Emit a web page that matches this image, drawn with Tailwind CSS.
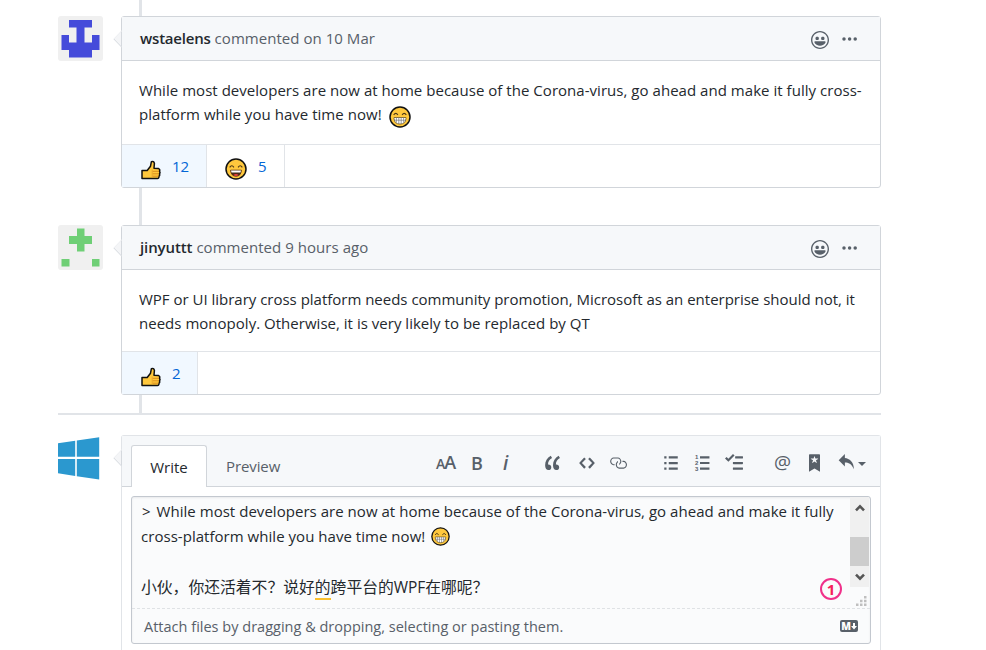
<!DOCTYPE html>
<html lang="en">
<head>
<meta charset="utf-8">
<title>Issue discussion</title>
<script src="https://cdn.jsdelivr.net/npm/@tailwindcss/browser@4"></script>
</head>
<body class="bg-white">
<svg class="hidden" xmlns="http://www.w3.org/2000/svg">
  <symbol id="smiley" viewBox="0 0 16 16"><path fill-rule="evenodd" d="M8 0C3.58 0 0 3.58 0 8s3.58 8 8 8 8-3.58 8-8-3.58-8-8-8zm4.81 12.81a6.72 6.72 0 01-2.17 1.45c-.83.36-1.72.53-2.64.53-.92 0-1.81-.17-2.64-.53-.81-.34-1.55-.83-2.17-1.45a6.773 6.773 0 01-1.45-2.17A6.59 6.59 0 011.21 8c0-.92.17-1.81.53-2.64.34-.81.83-1.55 1.45-2.17.62-.62 1.36-1.11 2.17-1.45A6.59 6.59 0 018 1.21c.92 0 1.81.17 2.64.53.81.34 1.55.83 2.17 1.45.62.62 1.11 1.36 1.45 2.17.36.83.53 1.72.53 2.64 0 .92-.17 1.81-.53 2.64-.34.81-.83 1.55-1.45 2.17zM4 6.8v-.59c0-.66.53-1.19 1.2-1.19h.59c.66 0 1.19.53 1.19 1.19v.59c0 .67-.53 1.2-1.19 1.2H5.2C4.53 8 4 7.47 4 6.8zm5 0v-.59c0-.66.53-1.19 1.2-1.19h.59c.66 0 1.19.53 1.19 1.19v.59c0 .67-.53 1.2-1.19 1.2h-.59C9.53 8 9 7.47 9 6.8zm4 3.2c-.72 1.88-2.91 3-5 3s-4.28-1.13-5-3c-.14-.39.23-1 .66-1h8.59c.41 0 .89.61.75 1z"/></symbol>
  <symbol id="dots" viewBox="0 0 16 4"><circle cx="2" cy="2" r="1.75"/><circle cx="7.6" cy="2" r="1.75"/><circle cx="13.2" cy="2" r="1.75"/></symbol>
  <symbol id="thumb" viewBox="0 0 20 20"><path d="M1 10.5h5.2L9.5 6.2 10.4 1.6Q12.8.8 13.4 3.4L13 8.200l4.600.4q1.800 1 .8 2.600 1.200 1.400 0 2.600.8 1.500-.5 2.500.3 2-1.500 2.200H1z" fill="#ffc83d" stroke="#111" stroke-width="1.5" stroke-linejoin="round"/><path d="M11.5 11.3h6.5M11.5 13.8h6.2M11.5 16.2h6" stroke="#d98d1c" stroke-width="1" fill="none"/><path d="M11.2 9.5v8" stroke="#e8a32c" stroke-width=".8"/></symbol>
  <symbol id="grin" viewBox="0 0 22 22"><circle cx="11" cy="11" r="10" fill="#ffc83d" stroke="#111" stroke-width="1.5"/><path d="M4.700 9Q6.800 5.800 8.900 9M13.100 9Q15.200 5.800 17.300 9" stroke="#4a3617" stroke-width="1.1" fill="none"/><path d="M5 11.500h12v1.200q-.6 5.400-6 5.400t-6-5.400z" fill="#fff" stroke="#6b5420" stroke-width=".8"/><path d="M7.400 11.500v5M9.800 11.500v6.500M12.200 11.500v6.500M14.600 11.500v5M5 14.200h12" stroke="#777" stroke-width=".7"/></symbol>
  <symbol id="laugh" viewBox="0 0 22 22"><circle cx="11" cy="11" r="10" fill="#ffc83d" stroke="#111" stroke-width="1.5"/><path d="M4.700 9.400Q6.800 6 8.900 9.400M13.100 9.400Q15.200 6 17.300 9.400" stroke="#4a3617" stroke-width="1.1" fill="none"/><path d="M5.600 12.200h10.800q-.4 6-5.400 6t-5.400-6z" fill="#4a2a14" stroke="#4a2a14" stroke-width=".8"/><path d="M6 12.500h10l-.5 2h-9z" fill="#fff"/><path d="M8.300 17.100q2.700-2.200 5.400 0-2.700 1.700-5.400 0z" fill="#e8413c"/></symbol>
  <symbol id="notch" viewBox="0 0 9 18"><path d="M9 .5.8 9 9 17.500z" fill="#f4f5f7"/><path d="M.8 9 9 17.500" stroke="#d5d9de" stroke-width="1" fill="none"/><path d="M.8 9 9 .5" stroke="#eceef1" stroke-width="1" fill="none"/><path d="M8 1.500h1v15H8z" fill="#d5d9de"/></symbol>
</svg>

<div class="relative h-[650px] w-[986px] overflow-hidden bg-white pl-[58px] font-['Open_Sans','Noto_Sans',sans-serif] text-[15px] text-[#24292e]">
  <div class="absolute left-[139px] top-0 h-[413px] w-[3px] bg-[#e1e4e8]"></div>

  <main class="relative flex w-[823px] flex-col pt-4">
    <article class="flex h-[172px]">
      <svg class="mr-[18px] size-[45px] shrink-0" viewBox="0 0 45 45"><rect width="45" height="45" rx="3" fill="#f0f0f0"/><path d="M11 4h23v7.500h-7.500v15h7.500v-7.500H41.500v15H34v7.500H11V34H3.500V19H11v7.500h7.500v-15H11z" fill="#454bda"/></svg>
      <section class="relative flex w-[760px] flex-col rounded-[3px] border border-[#d1d5da] bg-white">
        <svg class="absolute -left-[9px] top-[13px] h-[18px] w-[9px]"><use href="#notch"/></svg>
        <header class="flex h-11 items-center border-b border-[#d1d5da] bg-[#f6f8fa] pl-[18px] pr-[22px] text-[#586069]">
          <p class="whitespace-nowrap tracking-[0.04px]"><strong class="font-semibold tracking-[-0.2px] text-[#24292e]">wstaelens</strong> commented on 10 Mar</p>
          <svg class="ml-auto mt-[3px] size-[18px]" fill="#586069"><use href="#smiley"/></svg>
          <svg class="ml-[13px] mt-[1px] h-1 w-4" fill="#586069"><use href="#dots"/></svg>
        </header>
        <div class="flex h-[84px] flex-col border-b border-[#e1e4e8] pl-[17px] pt-[17px] leading-6">
          <p class="whitespace-nowrap tracking-[0.035px]">While most developers are now at home because of the Corona-virus, go ahead and make it fully cross-</p>
          <p class="flex whitespace-nowrap tracking-[0.035px]"><span>platform while you have time now!</span><svg class="ml-[7px] mt-[4px] size-[22px]"><use href="#grin"/></svg></p>
        </div>
        <div class="flex flex-1 text-[#0366d6]">
          <div class="flex w-[85px] border-r border-[#e1e4e8] bg-[#f1f8ff] pl-[19px]"><svg class="mt-[15px] size-5"><use href="#thumb"/></svg><span class="ml-[11px] mt-[10px] leading-[22px]">12</span></div>
          <div class="flex w-[78px] border-r border-[#e1e4e8] pl-[18px]"><svg class="mt-[13px] size-[22px]"><use href="#laugh"/></svg><span class="ml-[11px] mt-[10px] leading-[22px]">5</span></div>
        </div>
      </section>
    </article>

    <article class="mt-[37px] flex h-[170px]">
      <svg class="mr-[18px] size-[45px] shrink-0" viewBox="0 0 45 45"><rect width="45" height="45" rx="3" fill="#f0f0f0"/><path d="M19 3.500h7.500V11H34v8h-7.500v7.500H19V19h-8v-8h8zM3.500 34h8v7.500h-8zM34 34h7.500v7.500H34z" fill="#6fcf76"/></svg>
      <section class="relative flex w-[760px] flex-col rounded-[3px] border border-[#d1d5da] bg-white">
        <svg class="absolute -left-[9px] top-[13px] h-[18px] w-[9px]"><use href="#notch"/></svg>
        <header class="flex h-11 items-center border-b border-[#d1d5da] bg-[#f6f8fa] pl-[18px] pr-[22px] text-[#586069]">
          <p class="whitespace-nowrap tracking-[0.04px]"><strong class="font-semibold tracking-[-0.1px] text-[#24292e]">jinyuttt</strong> commented 9 hours ago</p>
          <svg class="ml-auto mt-[2px] size-[18px]" fill="#586069"><use href="#smiley"/></svg>
          <svg class="ml-[13px] mt-[1px] h-1 w-4" fill="#586069"><use href="#dots"/></svg>
        </header>
        <div class="flex h-[82px] flex-col border-b border-[#e1e4e8] pl-[17px] pt-[17px] leading-6">
          <p class="whitespace-nowrap tracking-[-0.01px]">WPF or UI library cross platform needs community promotion, Microsoft as an enterprise should not, it</p>
          <p class="whitespace-nowrap tracking-[0.02px]">needs monopoly. Otherwise, it is very likely to be replaced by QT</p>
        </div>
        <div class="flex flex-1 text-[#0366d6]">
          <div class="flex w-[76px] border-r border-[#e1e4e8] bg-[#f1f8ff] pl-[19px]"><svg class="mt-[15px] size-5"><use href="#thumb"/></svg><span class="ml-[11px] mt-[10px] leading-[22px]">2</span></div>
        </div>
      </section>
    </article>

    <div class="mt-[18px] h-[2px] bg-[#e1e4e8]"></div>

    <div class="mt-5 flex h-[230px]">
      <svg class="mr-[18px] mt-[1px] h-[45px] w-[45px] shrink-0" viewBox="0 0 45 45" fill="#2b98cf"><path d="M0 7.200 17.200 4.800V20.700H0zM18.800 4.500 41.200 1.200V20.700H18.800zM0 23H17.200V40L0 37.300zM18.800 23H41.200V43.400L18.800 40.300z"/></svg>
      <section class="relative flex w-[760px] flex-col rounded-t-[3px] border border-b-0 border-[#e1e4e8] bg-white">
        <svg class="absolute -left-[9px] top-[13px] h-[18px] w-[9px]"><use href="#notch"/></svg>
        <header class="flex h-[51px] border-b border-[#d1d5da] bg-[#f6f8fa] pl-[9px]">
          <div class="-mb-px mt-[9px] flex h-[42px] w-[76px] items-center justify-center rounded-t-[3px] border border-b-0 border-[#d1d5da] bg-white pt-[1px]">Write</div>
          <div class="ml-[19px] mt-[9px] flex h-[42px] w-[60px] items-center pt-[1px] tracking-[-0.1px] text-[#586069]">Preview</div>
          <div class="mt-[18px] flex h-[18px] items-center pl-[150px] text-[#586069]">
            <span class="flex w-5 items-baseline font-['Open_Sans'] font-semibold leading-[18px] tracking-[-1px]"><span class="text-[14px]">A</span><span class="text-[18px]">A</span></span>
            <span class="ml-[15px] w-[13px] text-[18px] font-semibold leading-[18px]">B</span>
            <span class="ml-[19px] w-[6px] text-[19px] font-semibold italic leading-[18px]">i</span>
            <svg class="ml-[36px] h-[18px] w-4 shrink-0" viewBox="0 0 14 16" fill="#586069"><path d="M6.160 3.500C3.730 5.060 2.550 6.670 2.550 9.360c.16-.05.3-.05.44-.05 1.270 0 2.500.86 2.500 2.410 0 1.610-1.030 2.610-2.500 2.610-1.900 0-2.990-1.520-2.990-4.250 0-3.800 1.750-6.530 5.020-8.420L6.160 3.500zm7 0c-2.430 1.560-3.610 3.170-3.610 5.860.16-.05.3-.05.44-.05 1.270 0 2.500.86 2.500 2.410 0 1.610-1.030 2.610-2.500 2.610-1.890 0-2.980-1.520-2.980-4.250 0-3.800 1.750-6.530 5.020-8.420l1.140 1.840h-.01z"/></svg>
            <svg class="ml-[18px] h-[18px] w-4 shrink-0" viewBox="0 0 14 16" fill="#586069"><path d="M9.500 3L8 4.500 11.500 8 8 11.500 9.500 13 14 8 9.500 3zm-5 0L0 8l4.500 5L6 11.500 2.500 8 6 4.500 4.500 3z"/></svg>
            <svg class="ml-[14px] size-[18px] shrink-0" viewBox="0 0 16 16" fill="#586069"><path fill-rule="evenodd" d="M4 9h1v1H4c-1.500 0-3-1.690-3-3.500S2.550 3 4 3h4c1.450 0 3 1.690 3 3.500 0 1.410-.91 2.720-2 3.250V8.590c.58-.45 1-1.270 1-2.090C10 5.220 8.980 4 8 4H4c-.98 0-2 1.220-2 2.500S3 9 4 9zm9-3h-1v1h1c1 0 2 1.220 2 2.500S13.980 12 13 12H9c-.98 0-2-1.220-2-2.500 0-.83.42-1.640 1-2.090V6.250c-1.090.53-2 1.840-2 3.250C6 11.310 7.550 13 9 13h4c1.450 0 3-1.690 3-3.500S14.500 6 13 6z"/></svg>
            <svg class="ml-[37px] h-[18px] w-[14px] shrink-0" viewBox="0 0 12 16" fill="#586069"><path d="M0 2h2v2H0zM4 2h8v2H4zM0 7h2v2H0zM4 7h8v2H4zM0 12h2v2H0zM4 12h8v2H4z"/></svg>
            <span class="ml-[17px] flex h-[18px] w-[15px] shrink-0"><span class="flex h-[18px] w-[5px] flex-col gap-[1px] font-['Liberation_Sans'] text-[6px] font-bold leading-[5px] pt-[1px]"><span>1</span><span>2</span><span>3</span></span><svg class="h-[18px] w-[10px]" viewBox="0 0 9 16" fill="#586069"><path d="M0 2h8.500v2H0zM0 7h8.500v2H0zM0 12h8.500v2H0z"/></svg></span>
            <svg class="ml-[15px] size-[18px] shrink-0" viewBox="0 0 16 16" fill="#586069"><path d="M15.410 9H7.590C7 9 7 8.590 7 8c0-.59 0-1 .59-1h7.810c.59 0 .59.41.59 1 0 .59 0 1-.59 1h.01zM9.590 4C9 4 9 3.590 9 3c0-.59 0-1 .59-1h5.810c.59 0 .59.41.59 1 0 .59 0 1-.59 1H9.590zM0 3.910l1.410-1.300L3 4.200 7.090 0 8.500 1.410 3 6.910l-3-3zM7.590 12h7.810c.59 0 .59.41.59 1 0 .59 0 1-.59 1H7.590C7 14 7 13.590 7 13c0-.59 0-1 .59-1z"/></svg>
            <span class="-mt-[2px] ml-[31px] w-[17px] text-[19px] leading-[18px]">@</span>
            <svg class="ml-[18px] h-[18px] w-[11px] shrink-0" viewBox="0 0 10 16" fill="#586069"><path fill-rule="evenodd" d="M9 0H1C.27 0 0 .27 0 1v15l5-3.090L10 16V1c0-.73-.27-1-1-1zm-.78 4.250L6.360 5.610l.72 2.160c.06.22-.02.28-.2.17L5 6.600 3.120 7.940c-.19.11-.25.05-.2-.17l.72-2.160-1.860-1.360c-.17-.16-.14-.23.09-.23l2.300-.03.7-2.160h.25l.7 2.160 2.300.03c.23 0 .27.08.09.23h.01z"/></svg>
            <svg class="ml-[18px] h-[18px] w-4 shrink-0" viewBox="0 0 14 16" fill="#586069"><path d="M6 3.500c3.920.44 8 3.125 8 10-2.312-5.062-4.750-6-8-6V11L.5 5.500 6 0v3.500z"/></svg>
            <svg class="ml-1 mt-[2px] h-1 w-2 shrink-0" viewBox="0 0 8 4" fill="#586069"><path d="M0 0h8L4 4z"/></svg>
          </div>
        </header>
        <div class="ml-[9px] mt-[9px] flex h-[148px] w-[740px] flex-col rounded-[3px] border border-[#c3c8cf] bg-[#fafbfc] shadow-[inset_0_1px_2px_rgba(27,31,35,0.075)]">
          <div class="flex h-[112px] border-b border-dashed border-[#dfe2e5]">
            <div class="w-[718px] pl-[10px] pt-[2px] leading-[25.3px]">
              <p class="whitespace-nowrap tracking-[0.035px]"><span class="mr-[2px]">&gt;</span> While most developers are now at home because of the Corona-virus, go ahead and make it fully</p>
              <p class="-ml-[1px] flex whitespace-nowrap tracking-[0.035px]"><span>cross-platform while you have time now!</span><svg class="ml-[6px] mt-[3px] size-[19px]"><use href="#grin"/></svg></p>
              <p class="h-[24px]"></p>
              <p class="-ml-[1px] whitespace-nowrap font-['Noto_Sans_CJK_SC','Open_Sans',sans-serif] text-[15.8px]" lang="zh-CN">小伙，你还活着不？说好<span class="border-b-2 border-[#fbc02d]">的</span>跨平台的<span class="font-['Open_Sans'] text-[15.5px] tracking-[-0.1px]">WPF</span>在哪呢？</p>
            </div>
            <div class="flex w-5 flex-col">
              <div class="flex h-[90px] w-[19px] flex-col items-center bg-[#f0f0f0]">
                <svg class="mt-[7px] h-[8px] w-[10px] shrink-0" viewBox="0 0 10 8"><path d="M1 6.300 5 2.300 9 6.300" fill="none" stroke="#555" stroke-width="2.600"/></svg>
                <div class="mt-[25px] h-[29px] w-[19px] bg-[#cdcdcd]"></div>
                <svg class="mt-[7px] h-[8px] w-[10px] shrink-0" viewBox="0 0 10 8"><path d="M1 1.700 5 5.700 9 1.700" fill="none" stroke="#555" stroke-width="2.600"/></svg>
              </div>
              <svg class="ml-[6px] mt-[9px] h-[10px] w-[11px]" viewBox="0 0 11 10" fill="#bfbfbf"><path d="M8 0h2.500v2.500H8zM4 3.700h2.500v2.500H4zM8 3.700h2.500v2.500H8zM0 7.400h2.500v2.500H0zM4 7.400h2.500v2.500H4zM8 7.400h2.500v2.500H8z"/></svg>
            </div>
          </div>
          <div class="flex flex-1 items-center pl-3 pr-3 text-[#586069]">
            <p class="whitespace-nowrap pt-[2px] text-[14.5px] tracking-[0.01px]">Attach files by dragging &amp; dropping, selecting or pasting them.</p>
            <span class="ml-auto flex h-[12px] w-[18px] items-center justify-center rounded-[2px] bg-[#586069] text-[10px] font-extrabold leading-[12px] text-white">M<svg class="h-[8px] w-[6px]" viewBox="0 0 6 8" fill="#fff"><path d="M2 1h2v3h2L3 7.500 0 4h2z"/></svg></span>
          </div>
        </div>
        <div class="absolute left-[698px] top-[142px] flex size-[22px] items-center justify-center rounded-full border-2 border-[#f0308a] text-[15px] font-bold leading-none text-[#f5205a]">1</div>
      </section>
    </div>
  </main>
</div>
</body>
</html>
